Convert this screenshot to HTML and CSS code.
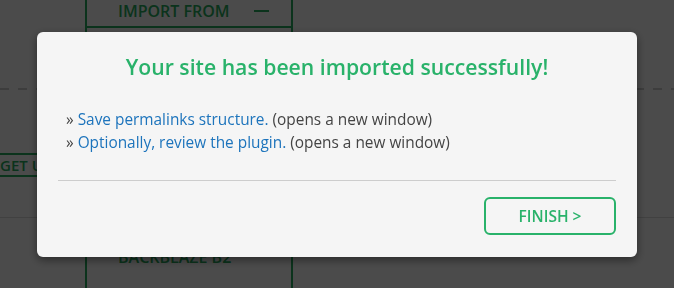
FILE: index.html
```html
<!DOCTYPE html>
<html lang="en">
<head>
    <meta charset="UTF-8">
    <meta name="viewport" content="width=device-width, initial-scale=1.0">
    <title>Import finished</title>
    <link rel="stylesheet" href="styles.css">
</head>
<body>
    <div class="page">
        <div class="dash dash-left"></div>
        <div class="dash dash-right"></div>
        <button class="get-btn">GET UPDRAFTPLUS</button>
        <div class="sep sep-left"></div>
        <div class="sep sep-right"></div>

        <div class="import-box">
            <div class="import-head">
                <span>IMPORT FROM</span>
                <span class="toggle"></span>
            </div>
            <div class="import-body">
                <span class="store">BACKBLAZE B2</span>
            </div>
        </div>
    </div>

    <div class="overlay">
        <div class="modal">
            <h2 class="modal-title">Your site has been imported successfully!</h2>
            <ul class="steps">
                <li>&raquo; <a href="#">Save permalinks structure.</a> (opens a new window)</li>
                <li>&raquo; <a href="#">Optionally, review the plugin.</a> (opens a new window)</li>
            </ul>
            <hr class="modal-rule">
            <div class="modal-actions">
                <button class="finish-btn">FINISH &gt;</button>
            </div>
        </div>
    </div>
</body>
</html>
```

FILE: styles.css
```css
* {
    box-sizing: border-box;
}
html, body {
    margin: 0;
    height: 100%;
}
body {
    font-family: "Open Sans", "Noto Sans", sans-serif;
    background: #fff;
    overflow: hidden;
}

/* page behind the dialog */
.page {
    display: grid;
    grid-template-columns: 85px 208px 1fr;
    grid-template-rows: 88px 2px 63px 24px 40px 1px 1fr;
    height: 288px;
}
.dash {
    grid-row: 2;
    background: repeating-linear-gradient(90deg, #cfcfcf 0 9px, transparent 9px 18px);
}
.dash-left { grid-column: 1; }
.dash-right { grid-column: 3; }
.sep {
    grid-row: 6;
    background: #dcdcdc;
}
.sep-left { grid-column: 1; }
.sep-right { grid-column: 3; }
.get-btn {
    grid-row: 4;
    grid-column: 1 / 3;
    justify-self: start;
    margin-left: -4px;
    padding: 0 10px 0 2px;
    border: 2px solid #27ae60;
    background: #fff;
    color: #27ae60;
    font-family: inherit;
    font-size: 15px;
    font-weight: 600;
    line-height: 18px;
    white-space: nowrap;
}
.import-box {
    grid-column: 2;
    grid-row: 1 / -1;
    display: flex;
    flex-direction: column;
    border-left: 2px solid #27ae60;
    border-right: 2px solid #27ae60;
    color: #27ae60;
    font-size: 16px;
    font-weight: 600;
    line-height: 22px;
}
.import-head {
    height: 28px;
    display: flex;
    align-items: flex-start;
    gap: 24px;
    padding: 0 0 0 31px;
    border-bottom: 2px solid #27ae60;
}
.toggle {
    width: 15px;
    height: 2px;
    margin-top: 10px;
    background: #27ae60;
}
.import-body {
    flex: 1;
    display: flex;
    flex-direction: column;
    justify-content: flex-end;
    align-items: flex-start;
    padding: 0 0 20px 31px;
}

/* dialog */
.overlay {
    position: fixed;
    inset: 0;
    background: rgba(0, 0, 0, 0.705);
    display: flex;
    justify-content: center;
    align-items: flex-start;
    padding-top: 32px;
}
.modal {
    width: 600px;
    background: #f5f5f5;
    border-radius: 6px;
    box-shadow: 0 3px 10px rgba(0, 0, 0, 0.45);
    padding: 21px 21px 22px;
}
.modal-title {
    margin: 0;
    text-align: center;
    color: #29b26a;
    font-size: 21.2px;
    font-weight: 600;
    line-height: 27px;
}
.steps {
    list-style: none;
    margin: 28px 0 0;
    padding: 0 8px;
    color: #444;
    font-size: 15.4px;
    line-height: 23px;
}
.steps a {
    color: #1d74bc;
    text-decoration: none;
}
.modal-rule {
    margin: 26px 0 0;
    border: none;
    border-top: 1px solid #cdcdcd;
}
.modal-actions {
    display: flex;
    justify-content: flex-end;
    margin-top: 16px;
}
.finish-btn {
    width: 132px;
    height: 38px;
    border: 2px solid #29b26a;
    border-radius: 6px;
    background: transparent;
    color: #29b26a;
    font-family: inherit;
    font-size: 15.5px;
    font-weight: 600;
    cursor: pointer;
}
```
